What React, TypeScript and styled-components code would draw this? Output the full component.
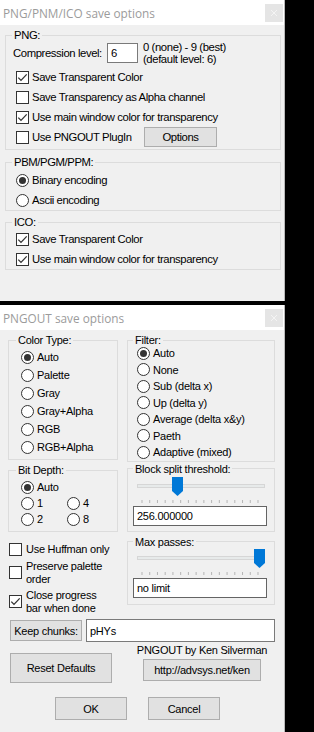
import React from "react";
import styled, { createGlobalStyle } from "styled-components";

const GlobalStyle = createGlobalStyle`
  html, body { margin: 0; padding: 0; background: #000; }
  body { font-family: "Liberation Sans", Arial, sans-serif; color: #000; }
  * { box-sizing: border-box; }
`;

const Screen = styled.div`
  width: 314px;
  height: 732px;
  overflow: hidden;
  background: #000;
  display: flex;
  flex-direction: column;
  gap: 4px;
`;

const Window = styled.div<{ $h?: number; $fs: number; $ls: number }>`
  width: 285px;
  ${(p) => (p.$h ? `height: ${p.$h}px; flex: none;` : `flex: 1;`)}
  background: #f0f0f0;
  display: flex;
  flex-direction: column;
  border-right: 1px solid #b9b9b9;
  font-size: ${(p) => p.$fs}px;
  letter-spacing: ${(p) => p.$ls}px;
`;

const TitleBar = styled.div`
  height: 25px;
  flex: none;
  background: #fff;
  display: flex;
  align-items: center;
  justify-content: space-between;
  padding: 0 1px 0 3px;
  letter-spacing: 0;
`;

const TitleText = styled.span`
  font-family: "Open Sans", "Liberation Sans", sans-serif;
  font-size: 11.8px;
  color: #9b9b9b;
  white-space: nowrap;
`;

const CloseBox = styled.div`
  width: 18px;
  height: 18px;
  background: #e5e5e5;
  display: flex;
  align-items: center;
  justify-content: center;
`;

const Body = styled.div<{ $pad: string }>`
  flex: 1;
  display: flex;
  flex-direction: column;
  padding: ${(p) => p.$pad};
`;

const Group = styled.fieldset<{ $w: number; $pb?: number; $mt?: number }>`
  width: ${(p) => p.$w}px;
  margin: ${(p) => p.$mt ?? 0}px 0 0 0;
  padding: 0 0 ${(p) => p.$pb ?? 0}px 0;
  border: 1px solid #dcdcdc;
  min-width: 0;
`;

const Legend = styled.legend<{ $ml: number }>`
  padding: 0 2px;
  margin-left: ${(p) => p.$ml}px;
  line-height: 14px;
  white-space: nowrap;
`;

const Inner = styled.div<{ $pl?: number; $mt?: number }>`
  display: flex;
  flex-direction: column;
  padding-left: ${(p) => p.$pl ?? 0}px;
  margin-top: ${(p) => p.$mt ?? 0}px;
`;

const Row = styled.label<{ $h: number; $gap?: number; $mt?: number; $ml?: number }>`
  display: flex;
  align-items: center;
  height: ${(p) => p.$h}px;
  gap: ${(p) => p.$gap ?? 3}px;
  margin-top: ${(p) => p.$mt ?? 0}px;
  margin-left: ${(p) => p.$ml ?? 0}px;
  white-space: nowrap;
`;

const Box = styled.span`
  width: 13px;
  height: 13px;
  flex: none;
  border: 1px solid #333;
  background: #fff;
  display: flex;
  align-items: center;
  justify-content: center;
`;

const Radio = styled.span<{ $on?: boolean }>`
  width: 13px;
  height: 13px;
  flex: none;
  border: 1px solid #333;
  border-radius: 50%;
  background: #fff;
  position: relative;
  &::after {
    content: "";
    display: ${(p) => (p.$on ? "block" : "none")};
    position: absolute;
    inset: 2px;
    border-radius: 50%;
    background: #333;
  }
`;

const Check = ({ on }: { on?: boolean }) => (
  <Box>
    {on && (
      <svg width="11" height="11" viewBox="0 0 11 11">
        <polyline points="1.3,5.6 4,8.4 9.7,2.4" fill="none" stroke="#333" strokeWidth="1.3" />
      </svg>
    )}
  </Box>
);

const CompRow = styled.div`
  display: flex;
  align-items: center;
  height: 20px;
  margin: 1px 0 4px -3px;
  white-space: nowrap;
`;

const CompLabel = styled.span`
  width: 94px;
  flex: none;
`;

const Edit = styled.input<{ $w: number; $h: number; $ml?: number; $border: string }>`
  width: ${(p) => p.$w}px;
  height: ${(p) => p.$h}px;
  margin: 0 0 0 ${(p) => p.$ml ?? 0}px;
  border: 1px solid ${(p) => p.$border};
  background: #fff;
  font: inherit;
  letter-spacing: inherit;
  color: #000;
  padding: 0 0 0 3px;
  outline: none;
  flex: none;
`;

const Desc = styled.div`
  display: flex;
  flex-direction: column;
  margin-left: 5px;
  line-height: 12px;
`;

const Button = styled.button<{ $w: number; $h: number; $ml?: number; $mt?: number }>`
  width: ${(p) => p.$w}px;
  height: ${(p) => p.$h}px;
  margin: ${(p) => p.$mt ?? 0}px 0 0 ${(p) => p.$ml ?? 0}px;
  background: #e1e1e1;
  border: 1px solid #adadad;
  font: inherit;
  letter-spacing: inherit;
  color: #000;
  padding: 0;
  flex: none;
  white-space: nowrap;
`;

const PlugLabel = styled.label`
  display: flex;
  align-items: center;
  gap: 3px;
  width: 128px;
  white-space: nowrap;
`;

const PlugRow = styled.div`
  display: flex;
  align-items: center;
  height: 20px;
`;

const Columns = styled.div`
  display: flex;
  align-items: flex-start;
  gap: 9px;
`;

const Col = styled.div<{ $w: number }>`
  width: ${(p) => p.$w}px;
  display: flex;
  flex-direction: column;
`;

const BitGrid = styled.div`
  display: grid;
  grid-template-columns: 46px auto;
  grid-auto-rows: 16px;
  margin-top: 2px;
  padding-left: 12px;
`;

const MultiText = styled.span`
  line-height: 13px;
  white-space: nowrap;
`;

const FullRow = styled.div<{ $mt: number; $pl: number; $gap?: number; $align?: string }>`
  display: flex;
  align-items: ${(p) => p.$align ?? "center"};
  gap: ${(p) => p.$gap ?? 0}px;
  margin-top: ${(p) => p.$mt}px;
  padding-left: ${(p) => p.$pl}px;
`;

const Credit = styled.div`
  width: 130px;
  margin-left: 25px;
  display: flex;
  flex-direction: column;
  align-items: center;
  line-height: 13px;
  white-space: nowrap;
`;

const SliderSvg = styled.svg`
  display: block;
  margin-left: 5px;
  flex: none;
`;

const Slider = ({ thumb }: { thumb: number }) => {
  const ticks = Array.from({ length: 16 }, (_, i) => 9 + (i * 116) / 15);
  return (
    <SliderSvg width="134" height="30" viewBox="0 0 134 30">
      <rect x="4.5" y="8.5" width="127" height="3" fill="#e7eaea" stroke="#d6d6d6" />
      {ticks.map((t, i) => (
        <line key={i} x1={t} x2={t} y1="24" y2="27" stroke="#b5b5b5" strokeWidth="1" />
      ))}
      <path d={`M${thumb} 1 H${thumb + 11} V15 L${thumb + 5.5} 20 L${thumb} 15 Z`} fill="#0078d7" />
    </SliderSvg>
  );
};

const CloseGlyph = () => (
  <CloseBox>
    <svg width="8" height="8" viewBox="0 0 8 8">
      <path d="M1 1 L7 7 M7 1 L1 7" stroke="#f4f4f4" strokeWidth="1" />
    </svg>
  </CloseBox>
);

export default function App() {
  const colorTypes = ["Auto", "Palette", "Gray", "Gray+Alpha", "RGB", "RGB+Alpha"];
  const filters = ["Auto", "None", "Sub (delta x)", "Up (delta y)", "Average (delta x&y)", "Paeth", "Adaptive (mixed)"];
  return (
    <>
      <GlobalStyle />
      <Screen>
        <Window $h={301} $fs={11.3} $ls={-0.4}>
          <TitleBar>
            <TitleText>PNG/PNM/ICO save options</TitleText>
            <CloseGlyph />
          </TitleBar>
          <Body $pad="3px 0 0 5px">
            <Group $w={276} $pb={2}>
              <Legend $ml={6}>PNG:</Legend>
              <Inner $pl={10}>
                <CompRow>
                  <CompLabel>Compression level:</CompLabel>
                  <Edit $w={31} $h={20} $border="#7a7a7a" defaultValue="6" />
                  <Desc>
                    <span>0 (none) - 9 (best)</span>
                    <span>(default level: 6)</span>
                  </Desc>
                </CompRow>
                <Row $h={20}>
                  <Check on />
                  <span>Save Transparent Color</span>
                </Row>
                <Row $h={20}>
                  <Check />
                  <span>Save Transparency as Alpha channel</span>
                </Row>
                <Row $h={20}>
                  <Check on />
                  <span>Use main window color for transparency</span>
                </Row>
                <PlugRow>
                  <PlugLabel>
                    <Check />
                    <span>Use PNGOUT PlugIn</span>
                  </PlugLabel>
                  <Button $w={73} $h={20}>Options</Button>
                </PlugRow>
              </Inner>
            </Group>
            <Group $w={276} $mt={5}>
              <Legend $ml={6}>PBM/PGM/PPM:</Legend>
              <Inner $pl={10} $mt={1}>
                <Row $h={20}>
                  <Radio $on />
                  <span>Binary encoding</span>
                </Row>
                <Row $h={20}>
                  <Radio />
                  <span>Ascii encoding</span>
                </Row>
              </Inner>
            </Group>
            <Group $w={276} $mt={4}>
              <Legend $ml={6}>ICO:</Legend>
              <Inner $pl={10}>
                <Row $h={20}>
                  <Check on />
                  <span>Save Transparent Color</span>
                </Row>
                <Row $h={20}>
                  <Check on />
                  <span>Use main window color for transparency</span>
                </Row>
              </Inner>
            </Group>
          </Body>
        </Window>

        <Window $fs={11} $ls={-0.25}>
          <TitleBar>
            <TitleText>PNGOUT save options</TitleText>
            <CloseGlyph />
          </TitleBar>
          <Body $pad="3px 0 0 8px">
            <Columns>
              <Col $w={110}>
                <Group $w={110} $pb={3}>
                  <Legend $ml={7}>Color Type:</Legend>
                  <Inner $pl={12} $mt={1}>
                    {colorTypes.map((c, i) => (
                      <Row key={c} $h={18}>
                        <Radio $on={i === 0} />
                        <span>{c}</span>
                      </Row>
                    ))}
                  </Inner>
                </Group>
                <Group $w={110} $pb={4} $mt={3}>
                  <Legend $ml={7}>Bit Depth:</Legend>
                  <BitGrid>
                    <Row $h={16}>
                      <Radio $on />
                      <span>Auto</span>
                    </Row>
                    <span />
                    <Row $h={16}>
                      <Radio />
                      <span>1</span>
                    </Row>
                    <Row $h={16}>
                      <Radio />
                      <span>4</span>
                    </Row>
                    <Row $h={16}>
                      <Radio />
                      <span>2</span>
                    </Row>
                    <Row $h={16}>
                      <Radio />
                      <span>8</span>
                    </Row>
                  </BitGrid>
                </Group>
                <Inner $mt={10}>
                  <Row $h={14} $gap={4} $ml={1}>
                    <Check />
                    <span>Use Huffman only</span>
                  </Row>
                  <Row $h={26} $gap={4} $mt={3.5} $ml={1}>
                    <Check />
                    <MultiText>
                      Preserve palette
                      <br />
                      order
                    </MultiText>
                  </Row>
                  <Row $h={26} $gap={4} $mt={3} $ml={1}>
                    <Check on />
                    <MultiText>
                      Close progress
                      <br />
                      bar when done
                    </MultiText>
                  </Row>
                </Inner>
              </Col>
              <Col $w={148}>
                <Group $w={148}>
                  <Legend $ml={5}>Filter:</Legend>
                  <Inner $pl={9} $mt={-2}>
                    {filters.map((f, i) => (
                      <Row key={f} $h={16.5}>
                        <Radio $on={i === 0} />
                        <span>{f}</span>
                      </Row>
                    ))}
                  </Inner>
                </Group>
                <Group $w={148} $pb={5}>
                  <Legend $ml={5}>Block split threshold:</Legend>
                  <Inner>
                    <Slider thumb={39} />
                    <Edit $w={134} $h={20} $ml={5} $border="#646464" defaultValue="256.000000" />
                  </Inner>
                </Group>
                <Group $w={148} $pb={6} $mt={3}>
                  <Legend $ml={5}>Max passes:</Legend>
                  <Inner $mt={-1}>
                    <Slider thumb={121} />
                    <Edit $w={134} $h={20} $ml={5} $border="#646464" defaultValue="no limit" />
                  </Inner>
                </Group>
              </Col>
            </Columns>
            <FullRow $mt={4.5} $pl={2} $gap={4}>
              <Button $w={72} $h={21}>Keep chunks:</Button>
              <Edit $w={189} $h={23} $border="#7a7a7a" defaultValue="pHYs" />
            </FullRow>
            <FullRow $mt={2} $pl={2} $align="flex-start">
              <Button $w={102} $h={30} $mt={9}>Reset Defaults</Button>
              <Credit>
                <span>PNGOUT by Ken Silverman</span>
                <Button $w={118} $h={22} $mt={2}>http://advsys.net/ken</Button>
              </Credit>
            </FullRow>
            <FullRow $mt={14} $pl={47} $gap={21}>
              <Button $w={72} $h={23}>OK</Button>
              <Button $w={72} $h={23}>Cancel</Button>
            </FullRow>
          </Body>
        </Window>
      </Screen>
    </>
  );
}
